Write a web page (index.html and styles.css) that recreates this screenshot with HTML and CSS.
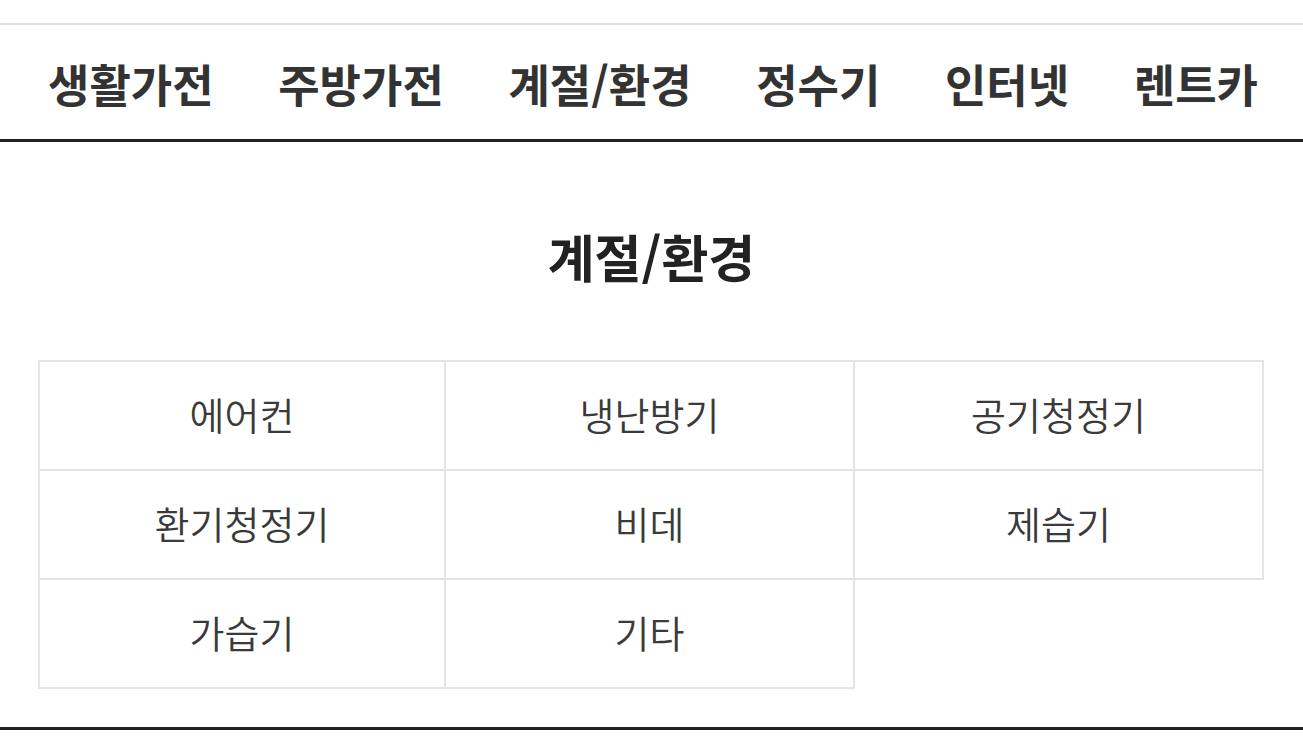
FILE: index.html
```html
<!DOCTYPE html>
<html lang="ko">
<head>
<meta charset="utf-8">
<link rel="stylesheet" href="styles.css">
</head>
<body>
<div class="topbar"></div>
<nav class="nav">
  <a class="nav-item">생활가전</a>
  <a class="nav-item">주방가전</a>
  <a class="nav-item">계절/환경</a>
  <a class="nav-item">정수기</a>
  <a class="nav-item">인터넷</a>
  <a class="nav-item">렌트카</a>
</nav>
<section class="content">
  <h2 class="title">계절/환경</h2>
  <div class="grid">
    <div class="cell">에어컨</div>
    <div class="cell">냉난방기</div>
    <div class="cell">공기청정기</div>
    <div class="cell">환기청정기</div>
    <div class="cell">비데</div>
    <div class="cell">제습기</div>
    <div class="cell">가습기</div>
    <div class="cell">기타</div>
  </div>
</section>
</body>
</html>
```
FILE: styles.css
```css
* { box-sizing: border-box; }
html, body { margin: 0; padding: 0; background: #fff; }
body {
  font-family: "Noto Sans CJK KR", "Noto Sans", sans-serif;
  color: #333;
}
.topbar {
  height: 25px;
  border-bottom: 2px solid #e2e2e2;
}
.nav {
  height: 117px;
  display: flex;
  align-items: center;
  justify-content: space-between;
  padding: 0 45px 0 48px;
  border-bottom: 3px solid #222;
}
.nav-item {
  font-size: 45px;
  font-weight: 700;
  color: #333;
  line-height: 1;
  padding-top: 2px;
}
.content {
  border-bottom: 3px solid #222;
  padding-bottom: 38px;
}
.title {
  margin: 0;
  padding-top: 84px;
  height: 218px;
  text-align: center;
  font-size: 51px;
  font-weight: 700;
  color: #222;
  line-height: 60px;
}
.grid {
  display: grid;
  grid-template-columns: 408px 409px 409px;
  grid-template-rows: 111px 109px 109px;
  margin: 0 39px 0 38px;
}
.cell {
  display: flex;
  align-items: center;
  justify-content: center;
  font-size: 38px;
  font-weight: 350;
  color: #3a3a3a;
  padding-bottom: 4px;
  border-right: 2px solid #e4e4e4;
  border-bottom: 2px solid #e4e4e4;
}
.cell:nth-child(-n+3) { border-top: 2px solid #e4e4e4; }
.cell:nth-child(3n+1) { border-left: 2px solid #e4e4e4; }
```
